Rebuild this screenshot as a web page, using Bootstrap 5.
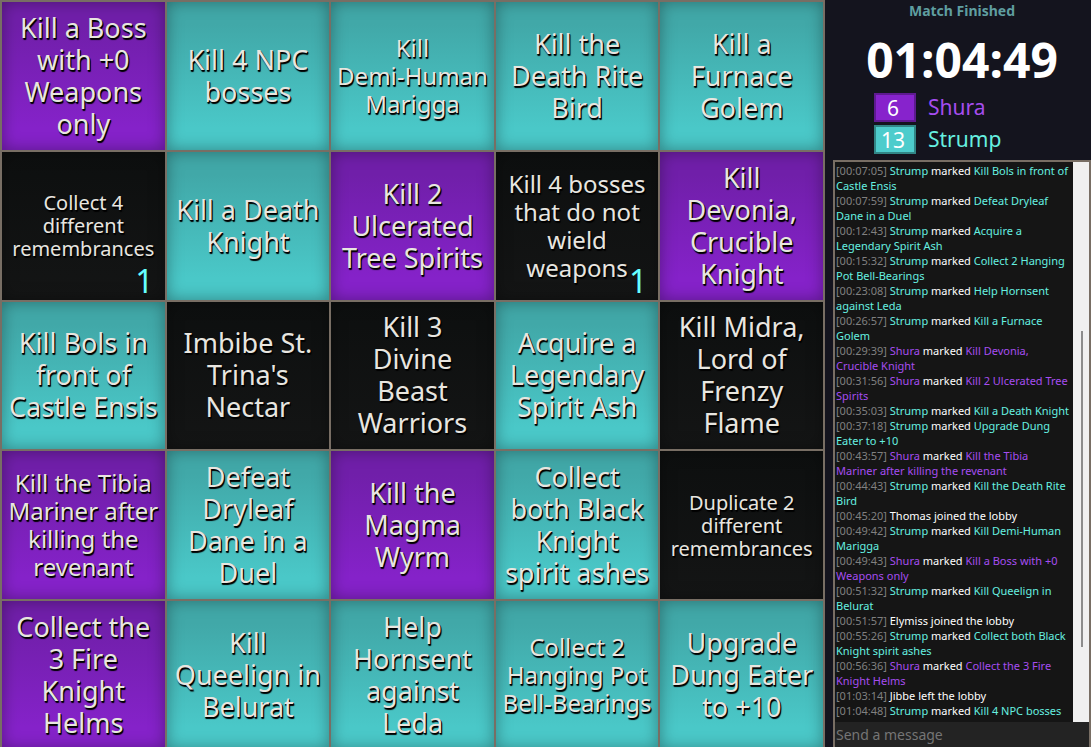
<!DOCTYPE html>
<html lang="en">
<head>
<meta charset="utf-8">
<meta name="viewport" content="width=device-width, initial-scale=1">
<title>Bingo match</title>
<link href="https://cdn.jsdelivr.net/npm/bootstrap@5.3.0/dist/css/bootstrap.min.css" rel="stylesheet">
<style>
  :root { --line: #786e64; --teal: #4dcccc; --teal-text: #66f0e0; --purple: #8723cc; --purple-text: #a64df0; }
  body { background: #14141e; color: #fff; font-family: "Noto Sans", "Open Sans", sans-serif; }
  .board { display: grid; grid-template-columns: repeat(5, minmax(0, 1fr)); grid-template-rows: repeat(5, minmax(0, 1fr)); gap: 2px; padding: 2px; height: calc(100vh + 4px); background: var(--line); }
  .tile { border: 0; padding: 0; color: #e8e6e0; font-size: 27px; line-height: 32px; text-shadow: 1px 1px 0 #000, 1px 2px 1px #000; background: linear-gradient(#0d0f0f, #141515); box-shadow: inset 0 0 16px rgba(0, 0, 0, .35); white-space: nowrap; }
  .tile-t { background: linear-gradient(#41a8a8 15%, #4ac8c8 85%); }
  .tile-p { background: linear-gradient(#701fa9 15%, #8522c9 85%); }
  .tile-md { font-size: 24px; line-height: 28px; }
  .tile-sm { font-size: 20px; line-height: 23px; }
  .tally { right: 11px; bottom: 1px; font-size: 32px; line-height: 36px; color: #6ff; text-shadow: none; }
  .side { width: 266px; padding-left: 8px; }
  .state { font-size: 14px; line-height: 22px; color: #5f9ea0; }
  .timer { font-size: 48px; line-height: 76px; }
  .scores { gap: 3px; margin: -5px 0 6px 41px; }
  .team { gap: 12px; height: 29px; font-size: 21px; line-height: 29px; }
  .points { width: 42px; border: 2px solid; line-height: 27px; padding-right: 4px; }
  .points-p { background: var(--purple); border-color: #5e1a90; }
  .points-t { background: var(--teal); border-color: #318686; }
  .chat { border: solid var(--line); border-width: 2px 2px 0; background: #151515; min-height: 0; }
  .log { padding: 1px 1px 0; font-size: 11px; line-height: 15px; white-space: nowrap; overflow: hidden; }
  .log time { color: #808080; }
  .t { color: var(--teal-text); }
  .p { color: var(--purple-text); }
  .track { width: 16px; background: #f0f0f0; display: grid; grid-template-rows: 169fr 316fr 75fr; }
  .thumb { grid-row: 2; width: 2px; background: #8c8c8c; margin-left: 8px; }
  .message { height: 25px; border: 0; padding: 0 1px; background: #232323; color: #ddd; font-size: 14px; outline: 0; }
  .message::placeholder { color: #757575; }
</style>
</head>
<body class="vh-100 overflow-hidden d-flex">
<main class="board flex-grow-1">
  <button class="tile tile-p">Kill a Boss<br>with +0<br>Weapons<br>only</button>
  <button class="tile tile-t">Kill 4 NPC<br>bosses</button>
  <button class="tile tile-t tile-md">Kill<br>Demi-Human<br>Marigga</button>
  <button class="tile tile-t">Kill the<br>Death Rite<br>Bird</button>
  <button class="tile tile-t">Kill a<br>Furnace<br>Golem</button>

  <button class="tile tile-sm position-relative">Collect 4<br>different<br>remembrances<span class="tally position-absolute">1</span></button>
  <button class="tile tile-t">Kill a Death<br>Knight</button>
  <button class="tile tile-p">Kill 2<br>Ulcerated<br>Tree Spirits</button>
  <button class="tile tile-md position-relative">Kill 4 bosses<br>that do not<br>wield<br>weapons<span class="tally position-absolute">1</span></button>
  <button class="tile tile-p">Kill<br>Devonia,<br>Crucible<br>Knight</button>

  <button class="tile tile-t">Kill Bols in<br>front of<br>Castle Ensis</button>
  <button class="tile">Imbibe St.<br>Trina's<br>Nectar</button>
  <button class="tile">Kill 3<br>Divine<br>Beast<br>Warriors</button>
  <button class="tile tile-t">Acquire a<br>Legendary<br>Spirit Ash</button>
  <button class="tile">Kill Midra,<br>Lord of<br>Frenzy<br>Flame</button>

  <button class="tile tile-p tile-md">Kill the Tibia<br>Mariner after<br>killing the<br>revenant</button>
  <button class="tile tile-t">Defeat<br>Dryleaf<br>Dane in a<br>Duel</button>
  <button class="tile tile-p">Kill the<br>Magma<br>Wyrm</button>
  <button class="tile tile-t">Collect<br>both Black<br>Knight<br>spirit ashes</button>
  <button class="tile tile-sm">Duplicate 2<br>different<br>remembrances</button>

  <button class="tile tile-p">Collect the<br>3 Fire<br>Knight<br>Helms</button>
  <button class="tile tile-t">Kill<br>Queelign in<br>Belurat</button>
  <button class="tile tile-t">Help<br>Hornsent<br>against<br>Leda</button>
  <button class="tile tile-t tile-md">Collect 2<br>Hanging Pot<br>Bell-Bearings</button>
  <button class="tile tile-t">Upgrade<br>Dung Eater<br>to +10</button>
</main>
<aside class="side flex-shrink-0 d-flex flex-column vh-100">
  <div class="state text-center fw-bold">Match Finished</div>
  <div class="timer text-center fw-bold">01:04:49</div>
  <div class="scores d-flex flex-column">
    <div class="team d-flex"><span class="points points-p text-center">6</span><span class="p">Shura</span></div>
    <div class="team d-flex"><span class="points points-t text-center">13</span><span class="t">Strump</span></div>
  </div>
  <section class="chat d-flex flex-column flex-grow-1">
    <div class="d-flex flex-grow-1 overflow-hidden">
      <div class="log flex-grow-1">
        <div><time>[00:07:05]</time> <span class="t">Strump</span> marked <span class="t">Kill Bols in front of<br>Castle Ensis</span></div>
        <div><time>[00:07:59]</time> <span class="t">Strump</span> marked <span class="t">Defeat Dryleaf<br>Dane in a Duel</span></div>
        <div><time>[00:12:43]</time> <span class="t">Strump</span> marked <span class="t">Acquire a<br>Legendary Spirit Ash</span></div>
        <div><time>[00:15:32]</time> <span class="t">Strump</span> marked <span class="t">Collect 2 Hanging<br>Pot Bell-Bearings</span></div>
        <div><time>[00:23:08]</time> <span class="t">Strump</span> marked <span class="t">Help Hornsent<br>against Leda</span></div>
        <div><time>[00:26:57]</time> <span class="t">Strump</span> marked <span class="t">Kill a Furnace<br>Golem</span></div>
        <div><time>[00:29:39]</time> <span class="p">Shura</span> marked <span class="p">Kill Devonia,<br>Crucible Knight</span></div>
        <div><time>[00:31:56]</time> <span class="p">Shura</span> marked <span class="p">Kill 2 Ulcerated Tree<br>Spirits</span></div>
        <div><time>[00:35:03]</time> <span class="t">Strump</span> marked <span class="t">Kill a Death Knight</span></div>
        <div><time>[00:37:18]</time> <span class="t">Strump</span> marked <span class="t">Upgrade Dung<br>Eater to +10</span></div>
        <div><time>[00:43:57]</time> <span class="p">Shura</span> marked <span class="p">Kill the Tibia<br>Mariner after killing the revenant</span></div>
        <div><time>[00:44:43]</time> <span class="t">Strump</span> marked <span class="t">Kill the Death Rite<br>Bird</span></div>
        <div><time>[00:45:20]</time> Thomas joined the lobby</div>
        <div><time>[00:49:42]</time> <span class="t">Strump</span> marked <span class="t">Kill Demi-Human<br>Marigga</span></div>
        <div><time>[00:49:43]</time> <span class="p">Shura</span> marked <span class="p">Kill a Boss with +0<br>Weapons only</span></div>
        <div><time>[00:51:32]</time> <span class="t">Strump</span> marked <span class="t">Kill Queelign in<br>Belurat</span></div>
        <div><time>[00:51:57]</time> Elymiss joined the lobby</div>
        <div><time>[00:55:26]</time> <span class="t">Strump</span> marked <span class="t">Collect both Black<br>Knight spirit ashes</span></div>
        <div><time>[00:56:36]</time> <span class="p">Shura</span> marked <span class="p">Collect the 3 Fire<br>Knight Helms</span></div>
        <div><time>[01:03:14]</time> Jibbe left the lobby</div>
        <div><time>[01:04:48]</time> <span class="t">Strump</span> marked <span class="t">Kill 4 NPC bosses</span></div>
        <div><time>[01:04:49]</time> Match status changed to <span class="t">Match</span></div>
      </div>
      <div class="track flex-shrink-0"><div class="thumb"></div></div>
    </div>
    <input class="message w-100 flex-shrink-0" type="text" placeholder="Send a message" aria-label="Send a message">
  </section>
</aside>
<script src="https://cdn.jsdelivr.net/npm/bootstrap@5.3.0/dist/js/bootstrap.bundle.min.js"></script>
</body>
</html>
